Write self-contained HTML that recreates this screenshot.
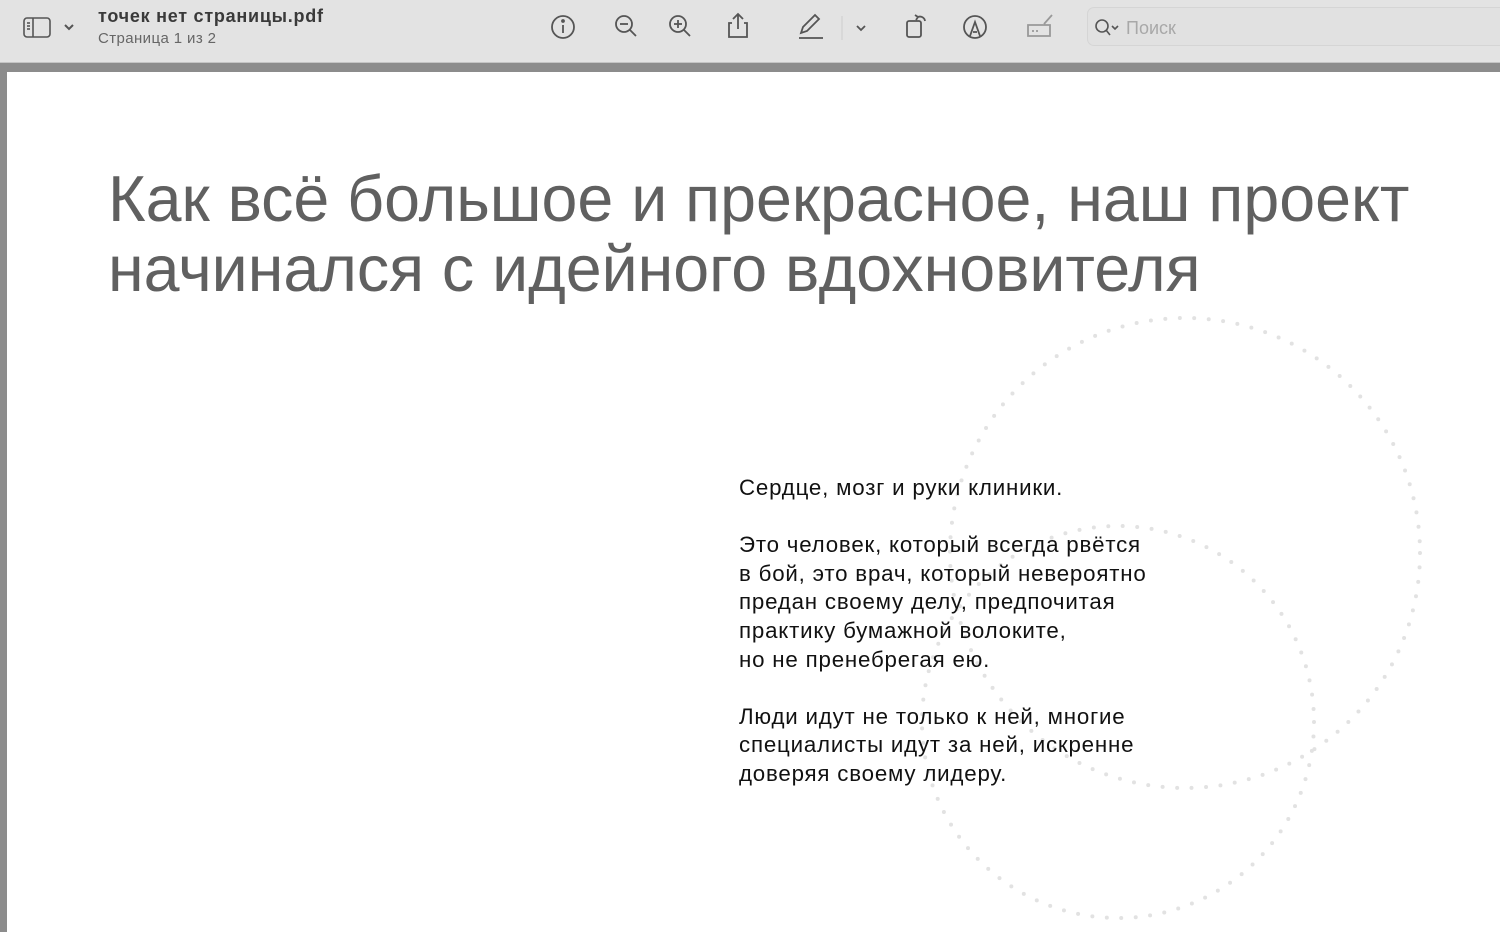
<!DOCTYPE html>
<html><head><meta charset="utf-8"><style>
*{margin:0;padding:0;box-sizing:border-box}
body{width:1500px;height:932px;overflow:hidden;background:#8c8c8c;font-family:"Liberation Sans","Noto Sans CJK SC",sans-serif;position:relative}
.tb{position:absolute;left:0;top:0;width:1500px;height:63px;background:#e3e3e3;border-bottom:1px solid #c4c4c4}
.page{position:absolute;left:7px;top:72px;width:1493px;height:860px;background:#fff}
.ic{position:absolute}
.t1{position:absolute;left:98px;top:6px;font-size:18px;letter-spacing:0.75px;font-weight:bold;color:#3a3a3a}
.t2{position:absolute;left:98px;top:30px;font-size:15px;letter-spacing:0.4px;color:#666}
.search{position:absolute;left:1087px;top:7px;width:420px;height:39px;border:1px solid #d5d5d5;border-radius:7px;background:#e1e1e1}
.search span{position:absolute;left:38px;top:10px;font-size:18px;color:#a8a8a8}
h1{position:absolute;left:108px;top:164px;font-size:64.5px;font-weight:normal;color:#606060;line-height:70px;white-space:nowrap}
.body{position:absolute;left:739px;top:474px;font-size:22.3px;letter-spacing:0.8px;line-height:28.6px;color:#111;white-space:nowrap}
.body p{margin-bottom:28.6px}
</style></head><body>
<div class="tb">
<svg class="ic" style="left:22px;top:14px" width="60" height="28" viewBox="0 0 60 28" fill="none" stroke="#555" stroke-width="1.6"><rect x="2" y="4" width="26" height="19" rx="3"/><line x1="11" y1="4" x2="11" y2="23"/><line x1="5" y1="9" x2="8" y2="9"/><line x1="5" y1="12" x2="8" y2="12"/><line x1="5" y1="15" x2="8" y2="15"/><path d="M43 11l4 4 4-4" stroke-width="2"/></svg>
<div class="t1">точек нет страницы.pdf</div>
<div class="t2">Страница 1 из 2</div>
<svg class="ic" style="left:545px;top:10px" width="540" height="36" viewBox="0 0 540 36" fill="none" stroke="#555" stroke-width="1.8">
<circle cx="18" cy="17" r="11"/><line x1="18" y1="15" x2="18" y2="23"/><circle cx="18" cy="11" r="1" fill="#555"/>
<circle cx="79" cy="14" r="8"/><line x1="85" y1="20" x2="91" y2="26"/><line x1="75" y1="14" x2="83" y2="14"/>
<circle cx="133" cy="14" r="8"/><line x1="139" y1="20" x2="145" y2="26"/><line x1="129" y1="14" x2="137" y2="14"/><line x1="133" y1="10" x2="133" y2="18"/>
<path d="M187 13h-3v14h18V13h-3M193 4v15M188 9l5-5 5 5"/>
<path d="M256 23l2-6 12-12 4 4-12 12z M254 28h24"/>
<line x1="297" y1="6" x2="297" y2="30" stroke="#ccc" stroke-width="1"/>
<path d="M312 16l4 4 4-4"/>
<rect x="362" y="11" width="14" height="16" rx="2"/><path d="M373 7a5 5 0 0 1 7 4M370 5l3 2-2 3"/>
<circle cx="430" cy="17" r="11"/><path d="M425 26l5-14 5 14M428 22h4"/>
<path d="M483 15h22v11h-22z M499 14l8-9" stroke="#999"/><path d="M487 21h8" stroke="#999" stroke-dasharray="2 2"/>
</svg>
<div class="search"><svg class="ic" style="left:6px;top:10px" width="30" height="20" fill="none" stroke="#555" stroke-width="1.6"><circle cx="8" cy="8" r="6"/><line x1="12" y1="12" x2="16" y2="17"/><path d="M18 8l3 3 3-3"/></svg><span>Поиск</span></div>
</div>
<div class="page"></div>
<svg style="position:absolute;left:0;top:0" width="1500" height="932" fill="none" stroke="#e2e2e2" stroke-width="4" stroke-linecap="round">
<circle cx="1185" cy="553" r="235" stroke-dasharray="0 14.5"/>
<circle cx="1118" cy="722" r="196" stroke-dasharray="0 14.5"/>
</svg>
<h1>Как всё большое и прекрасное, наш проект<br>начинался с идейного вдохновителя</h1>
<div class="body">
<p>Сердце, мозг и руки клиники.</p>
<p>Это человек, который всегда рвётся<br>в бой, это врач, который невероятно<br>предан своему делу, предпочитая<br>практику бумажной волоките,<br>но не пренебрегая ею.</p>
<p>Люди идут не только к ней, многие<br>специалисты идут за ней, искренне<br>доверяя своему лидеру.</p>
</div>
</body></html>
